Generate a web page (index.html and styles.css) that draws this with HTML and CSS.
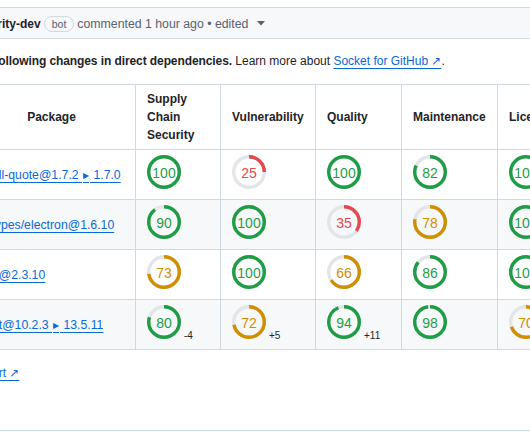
FILE: index.html
```html
<!DOCTYPE html>
<html lang="en">
<head>
<meta charset="utf-8">
<title>Socket comment</title>
<link rel="stylesheet" href="styles.css">
</head>
<body>
<div class="comment">
  <div class="comment-header">
    <strong class="author">security-dev</strong>
    <span class="badge">bot</span>
    <span class="meta">commented 1 hour ago • edited</span>
    <svg class="caret" width="8" height="5" viewBox="0 0 8 5"><path d="M0 0h8L4 4.5z"/></svg>
  </div>
  <div class="comment-body">
    <p class="intro"><strong>The following changes in direct dependencies.</strong> Learn more about <a href="#">Socket for GitHub ↗</a>.</p>
    <table class="deps">
      <colgroup>
        <col class="c-pkg"><col class="c-supply"><col class="c-vuln"><col class="c-quality"><col class="c-maint"><col class="c-lic">
      </colgroup>
      <thead>
        <tr>
          <th class="center">Package</th>
          <th>Supply<br>Chain<br>Security</th>
          <th>Vulnerability</th>
          <th>Quality</th>
          <th>Maintenance</th>
          <th>License</th>
        </tr>
      </thead>
      <tbody>
        <tr>
          <td><a class="pkg" href="#">shell-quote@1.7.2 <span class="to">▸</span> 1.7.0</a></td>
          <td class="sc"><svg class="score green" viewBox="0 0 34 34"><circle class="track" cx="17" cy="17" r="15.3"/><circle class="arc" cx="17" cy="17" r="15.3" pathLength="100" stroke-dasharray="100 100" transform="rotate(-90 17 17)"/><text x="17" y="17.5">100</text></svg></td>
          <td class="sc"><svg class="score red" viewBox="0 0 34 34"><circle class="track" cx="17" cy="17" r="15.3"/><circle class="arc" cx="17" cy="17" r="15.3" pathLength="100" stroke-dasharray="25 100" transform="rotate(-90 17 17)"/><text x="17" y="17.5">25</text></svg></td>
          <td class="sc"><svg class="score green" viewBox="0 0 34 34"><circle class="track" cx="17" cy="17" r="15.3"/><circle class="arc" cx="17" cy="17" r="15.3" pathLength="100" stroke-dasharray="100 100" transform="rotate(-90 17 17)"/><text x="17" y="17.5">100</text></svg></td>
          <td class="sc"><svg class="score green" viewBox="0 0 34 34"><circle class="track" cx="17" cy="17" r="15.3"/><circle class="arc" cx="17" cy="17" r="15.3" pathLength="100" stroke-dasharray="82 100" transform="rotate(-90 17 17)"/><text x="17" y="17.5">82</text></svg></td>
          <td class="sc"><svg class="score green" viewBox="0 0 34 34"><circle class="track" cx="17" cy="17" r="15.3"/><circle class="arc" cx="17" cy="17" r="15.3" pathLength="100" stroke-dasharray="100 100" transform="rotate(-90 17 17)"/><text x="17" y="17.5">100</text></svg></td>
        </tr>
        <tr>
          <td><a class="pkg" href="#">@types/electron@1.6.10</a></td>
          <td class="sc"><svg class="score green" viewBox="0 0 34 34"><circle class="track" cx="17" cy="17" r="15.3"/><circle class="arc" cx="17" cy="17" r="15.3" pathLength="100" stroke-dasharray="90 100" transform="rotate(-90 17 17)"/><text x="17" y="17.5">90</text></svg></td>
          <td class="sc"><svg class="score green" viewBox="0 0 34 34"><circle class="track" cx="17" cy="17" r="15.3"/><circle class="arc" cx="17" cy="17" r="15.3" pathLength="100" stroke-dasharray="100 100" transform="rotate(-90 17 17)"/><text x="17" y="17.5">100</text></svg></td>
          <td class="sc"><svg class="score red" viewBox="0 0 34 34"><circle class="track" cx="17" cy="17" r="15.3"/><circle class="arc" cx="17" cy="17" r="15.3" pathLength="100" stroke-dasharray="35 100" transform="rotate(-90 17 17)"/><text x="17" y="17.5">35</text></svg></td>
          <td class="sc"><svg class="score orange" viewBox="0 0 34 34"><circle class="track" cx="17" cy="17" r="15.3"/><circle class="arc" cx="17" cy="17" r="15.3" pathLength="100" stroke-dasharray="78 100" transform="rotate(-90 17 17)"/><text x="17" y="17.5">78</text></svg></td>
          <td class="sc"><svg class="score green" viewBox="0 0 34 34"><circle class="track" cx="17" cy="17" r="15.3"/><circle class="arc" cx="17" cy="17" r="15.3" pathLength="100" stroke-dasharray="100 100" transform="rotate(-90 17 17)"/><text x="17" y="17.5">100</text></svg></td>
        </tr>
        <tr>
          <td><a class="pkg" href="#">vue@2.3.10</a></td>
          <td class="sc"><svg class="score orange" viewBox="0 0 34 34"><circle class="track" cx="17" cy="17" r="15.3"/><circle class="arc" cx="17" cy="17" r="15.3" pathLength="100" stroke-dasharray="73 100" transform="rotate(-90 17 17)"/><text x="17" y="17.5">73</text></svg></td>
          <td class="sc"><svg class="score green" viewBox="0 0 34 34"><circle class="track" cx="17" cy="17" r="15.3"/><circle class="arc" cx="17" cy="17" r="15.3" pathLength="100" stroke-dasharray="100 100" transform="rotate(-90 17 17)"/><text x="17" y="17.5">100</text></svg></td>
          <td class="sc"><svg class="score orange" viewBox="0 0 34 34"><circle class="track" cx="17" cy="17" r="15.3"/><circle class="arc" cx="17" cy="17" r="15.3" pathLength="100" stroke-dasharray="66 100" transform="rotate(-90 17 17)"/><text x="17" y="17.5">66</text></svg></td>
          <td class="sc"><svg class="score green" viewBox="0 0 34 34"><circle class="track" cx="17" cy="17" r="15.3"/><circle class="arc" cx="17" cy="17" r="15.3" pathLength="100" stroke-dasharray="86 100" transform="rotate(-90 17 17)"/><text x="17" y="17.5">86</text></svg></td>
          <td class="sc"><svg class="score green" viewBox="0 0 34 34"><circle class="track" cx="17" cy="17" r="15.3"/><circle class="arc" cx="17" cy="17" r="15.3" pathLength="100" stroke-dasharray="100 100" transform="rotate(-90 17 17)"/><text x="17" y="17.5">100</text></svg></td>
        </tr>
        <tr>
          <td><a class="pkg" href="#">next@10.2.3 <span class="to">▸</span> 13.5.11</a></td>
          <td class="sc"><svg class="score green" viewBox="0 0 34 34"><circle class="track" cx="17" cy="17" r="15.3"/><circle class="arc" cx="17" cy="17" r="15.3" pathLength="100" stroke-dasharray="80 100" transform="rotate(-90 17 17)"/><text x="17" y="17.5">80</text></svg><span class="delta">-4</span></td>
          <td class="sc"><svg class="score orange" viewBox="0 0 34 34"><circle class="track" cx="17" cy="17" r="15.3"/><circle class="arc" cx="17" cy="17" r="15.3" pathLength="100" stroke-dasharray="72 100" transform="rotate(-90 17 17)"/><text x="17" y="17.5">72</text></svg><span class="delta">+5</span></td>
          <td class="sc"><svg class="score green" viewBox="0 0 34 34"><circle class="track" cx="17" cy="17" r="15.3"/><circle class="arc" cx="17" cy="17" r="15.3" pathLength="100" stroke-dasharray="94 100" transform="rotate(-90 17 17)"/><text x="17" y="17.5">94</text></svg><span class="delta">+11</span></td>
          <td class="sc"><svg class="score green" viewBox="0 0 34 34"><circle class="track" cx="17" cy="17" r="15.3"/><circle class="arc" cx="17" cy="17" r="15.3" pathLength="100" stroke-dasharray="98 100" transform="rotate(-90 17 17)"/><text x="17" y="17.5">98</text></svg></td>
          <td class="sc"><svg class="score orange" viewBox="0 0 34 34"><circle class="track" cx="17" cy="17" r="15.3"/><circle class="arc" cx="17" cy="17" r="15.3" pathLength="100" stroke-dasharray="70 100" transform="rotate(-90 17 17)"/><text x="17" y="17.5">70</text></svg></td>
        </tr>
      </tbody>
    </table>
    <p class="report"><a href="#">Report ↗</a></p>
  </div>
</div>
</body>
</html>
```

FILE: styles.css
```css
html, body {
  margin: 0;
  padding: 0;
  overflow: hidden;
  background: #ffffff;
}

body {
  font-family: "Liberation Sans", Arial, sans-serif;
  font-size: 12px;
  line-height: 18px;
  color: #1f2328;
}

a {
  color: #0969da;
  text-decoration: underline;
  text-underline-offset: 2.5px;
  text-decoration-thickness: 1px;
}

.comment {
  margin: 7px 0 0 -46px;
  width: 900px;
  border: 1px solid #d1d9e0;
  border-radius: 6px;
}

.comment-header {
  box-sizing: border-box;
  height: 31px;
  display: flex;
  align-items: center;
  gap: 3px;
  padding: 1px 15px 0;
  background: #f6f8fa;
  border-bottom: 1px solid #d1d9e0;
  border-radius: 6px 6px 0 0;
  color: #59636e;
}

.author {
  font-weight: 700;
  color: #1f2328;
}

.badge {
  border: 1px solid #d1d9e0;
  border-radius: 999px;
  padding: 0 7px;
  font-size: 10.5px;
  line-height: 14px;
  color: #59636e;
}

.meta {
  font-size: 12.3px;
}

.caret {
  margin-left: 6px;
  fill: #59636e;
}

.comment-body {
  padding: 13px 15px 48px;
}

.intro {
  margin: 0 0 14px;
}

.intro strong {
  letter-spacing: -0.09px;
}

.deps {
  border-collapse: collapse;
  table-layout: fixed;
  width: 626px;
  margin-left: -3px;
}

.c-pkg { width: 168px; }
.c-supply { width: 85px; }
.c-vuln { width: 95px; }
.c-quality { width: 86px; }
.c-maint { width: 96px; }
.c-lic { width: 96px; }

.deps th,
.deps td {
  border: 1px solid #d1d9e0;
  padding: 5px 11px;
  white-space: nowrap;
}

.deps th {
  font-weight: 700;
  text-align: left;
  vertical-align: middle;
}

.deps th.center {
  text-align: center;
}

.deps tbody tr:nth-child(even) {
  background: #f6f8fa;
}

.pkg {
  font-size: 12.25px;
}

.to {
  margin: 0 1px;
}

.deps td.sc {
  line-height: 17px;
}

.score {
  width: 34px;
  height: 34px;
  vertical-align: baseline;
}

.score .track {
  fill: none;
  stroke: #e3e5e8;
  stroke-width: 3.4;
}

.score .arc {
  fill: none;
  stroke-width: 3.4;
}

.score text {
  font-family: "Liberation Sans", Arial, sans-serif;
  font-size: 14px;
  text-anchor: middle;
  dominant-baseline: central;
}

.score.green .arc { stroke: #1f9d45; }
.score.green text { fill: #1f9d45; }
.score.orange .arc { stroke: #d18e00; }
.score.orange text { fill: #d18e00; }
.score.red .arc { stroke: #e5484d; }
.score.red text { fill: #e5484d; }

.delta {
  margin-left: 3px;
  font-size: 10px;
  color: #1f2328;
}

.report {
  margin: 14px 0 0;
}
```
